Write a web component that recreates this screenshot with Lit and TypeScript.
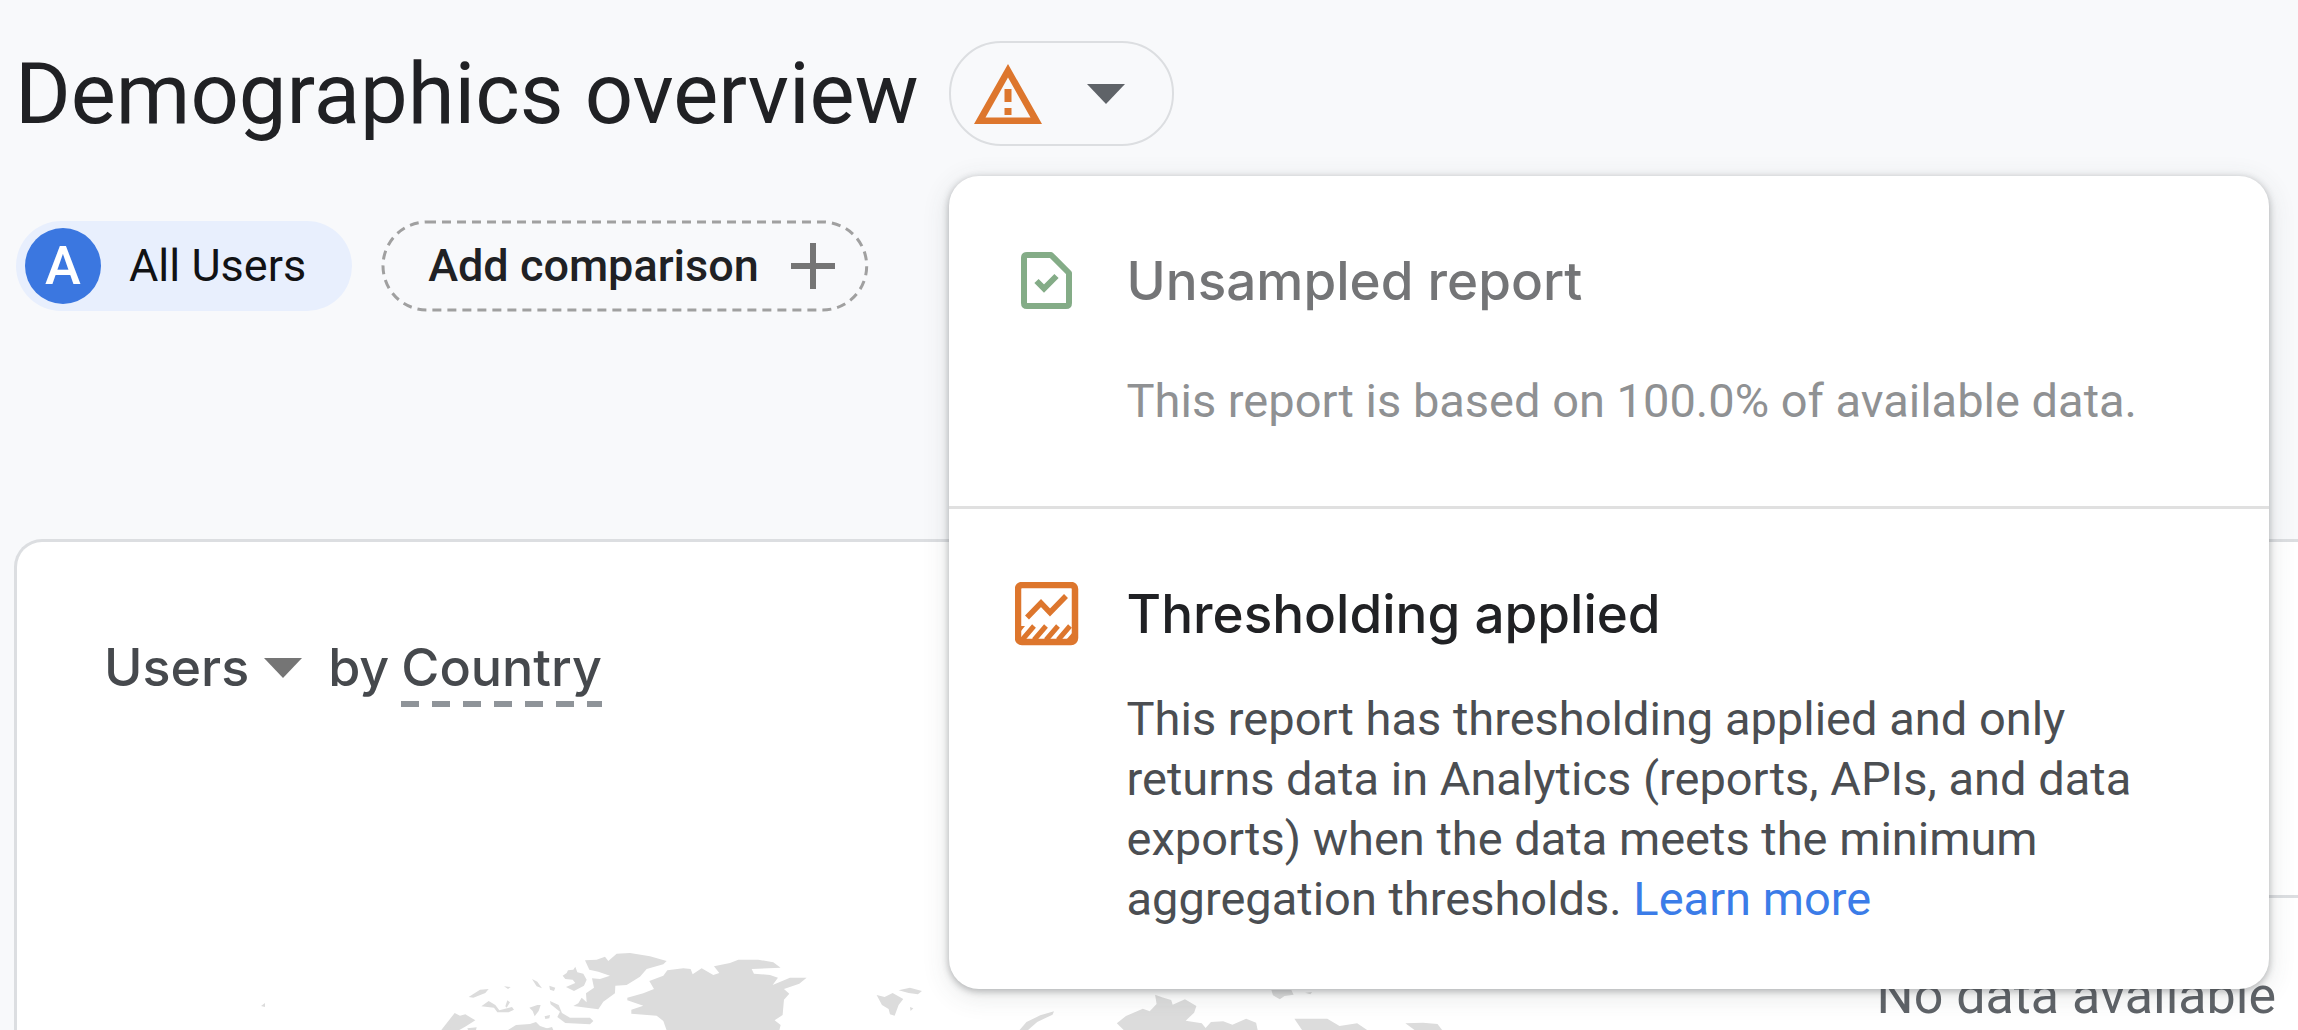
import { LitElement, html, css, svg } from "lit";
import { customElement, state } from "lit/decorators.js";

const caret = html`<svg class="caret" width="38" height="20" viewBox="0 0 38 20" aria-hidden="true">
  <path d="M0 0h38L19 20z" fill="currentColor" />
</svg>`;

const warningIcon = html`<svg width="68" height="60" viewBox="0 0 68 60" aria-hidden="true">
  <path fill="currentColor" fill-rule="evenodd" d="M34 0 68 60H0zM34 13.500 11.500 53.500H56.500z" />
  <path fill="currentColor" d="M30.500 25h7v13h-7zM30.500 44h7v7h-7z" />
</svg>`;

const unsampledIcon = html`<svg width="64" height="64" viewBox="0 0 64 64" aria-hidden="true">
  <path d="M12 6H36L54 24V54Q54 57 51 57H12Q9 57 9 54V9Q9 6 12 6Z" fill="none" stroke="currentColor" stroke-width="6" stroke-linejoin="round" />
  <path d="M21.500 32 29 39.500 41.500 27" fill="none" stroke="currentColor" stroke-width="6" />
</svg>`;

const thresholdIcon = html`<svg width="64" height="64" viewBox="0 0 64 64" aria-hidden="true">
  <rect x="3" y="3" width="57" height="57" rx="4" fill="none" stroke="currentColor" stroke-width="6.500" />
  <path d="M12 35.500 26 21 35 30.500 51 14" fill="none" stroke="currentColor" stroke-width="5.500" />
  <path d="M7 58 19 44M19 58 31 44M31 58 43 44M43 58 55 44" fill="none" stroke="currentColor" stroke-width="5" />
  <path d="M6 44h4l-4 5zM51 58 58 50v8z" fill="currentColor" />
</svg>`;

const plusIcon = html`<svg width="44" height="46" viewBox="0 0 44 46" aria-hidden="true">
  <path d="M22 0V46M0 23H44" stroke="currentColor" stroke-width="6" />
</svg>`;

/* Northern land masses, traced on a grid three times finer than the page. */
const northAmerica = [
  "465,46 500,44 525,35 535,48 560,26 600,24 660,34 710,48 700,58 650,72 630,95 590,120 556,122 555,145 520,170 505,193 430,183 445,175 455,158 470,172 468,145 492,128 486,100 510,102 540,92 505,80 478,74",
  "398,92 410,84 414,76 430,74 436,65 442,82 460,86 470,104 462,122 432,138 408,126 436,114 428,104 406,102",
  "592,158 640,145 672,132 658,108 700,92 712,76 760,70 782,72 788,88 815,70 850,90 868,84 852,64 900,54 925,44 985,44 1030,52 1052,68 965,72 972,86 1020,90 1044,98 1028,120 1080,98 1130,98 1108,116 1062,132 1078,146 1062,164 1058,210 1034,226 1052,240 1048,256 710,256 700,228 680,212 604,206 604,194 640,182 592,166",
  "34,255 74,204 90,212 106,208 136,226 108,244 88,255",
  "116,156 150,134 176,132 166,144 130,158",
  "154,184 176,168 196,180 208,196 246,186 252,194 236,202 202,202 192,188",
  "306,102 322,110 336,130 320,124",
  "358,122 376,128 372,138 360,134",
  "222,124 242,126 234,132",
  "298,188 322,180 332,180 326,198 314,214 308,198",
  "360,168 386,180 396,204 420,218 480,218 490,228 480,238 406,234 382,216 390,200 362,178",
  "344,214 360,210 358,220 346,222",
  "232,166 240,172 230,188 226,184",
  "112,250 140,247 138,255 114,255",
  "280,250 300,248 302,255 282,255",
  "344,252 366,246 370,255 346,255",
  "1340,150 1364,156 1388,144 1420,162 1406,180 1394,212 1380,208 1376,192 1356,180",
  "1406,136 1440,128 1476,138 1464,148 1436,144",
  "1440,186 1450,190 1442,198",
];

const eurasia = [
  "208,390 226,366 262,346 298,334 294,344 254,366 230,390",
  "462,370 486,348 530,326 548,334 566,312 562,284 580,292 604,300 608,314 640,298 670,318 664,338 642,362 684,370 694,384 708,366 740,364 764,374 800,356 826,368 830,390 480,390",
  "866,270 918,270 924,284 900,288 888,298 870,286",
  "926,356 1012,356 1044,378 1090,370 1116,390 946,390",
  "1216,370 1262,368 1300,372 1312,390 1240,390",
  "954,278 972,276 968,283",
];

@customElement("app-root")
export class AppRoot extends LitElement {
  static styles = css`
    :host {
      display: block;
      font-family: Roboto, "Liberation Sans", sans-serif;
      color: #202124;
    }
    * {
      box-sizing: border-box;
    }
    button {
      font: inherit;
      color: inherit;
      background: none;
      border: 0;
      padding: 0;
      margin: 0;
      cursor: pointer;
      text-align: left;
    }
    svg {
      display: block;
      flex: none;
    }
    h1,
    h2,
    h3,
    p {
      margin: 0;
      font-weight: 400;
    }
    .page {
      display: flex;
      flex-direction: column;
      min-height: 100vh;
      overflow: hidden;
      background: #f8f9fb;
    }
    .header {
      display: flex;
      align-items: center;
      gap: 30px;
      padding: 41px 15px 0;
    }
    .title {
      font-size: 85px;
      line-height: 104px;
      white-space: nowrap;
    }
    .quality {
      position: relative;
      z-index: 2;
    }
    .status {
      display: flex;
      align-items: center;
      gap: 45px;
      height: 105px;
      padding: 0 47px 0 23px;
      border: 2px solid #dcdee1;
      border-radius: 52px;
      color: #dd762d;
    }
    .status .caret {
      color: #5f6368;
    }
    .menu {
      position: absolute;
      top: calc(100% + 30px);
      left: 0;
      width: 1320px;
      background: #fff;
      border-radius: 30px;
      box-shadow: 0 2px 6px 1px rgba(60, 64, 67, 0.3), 0 6px 24px 4px rgba(60, 64, 67, 0.1);
    }
    .item {
      display: grid;
      grid-template-columns: 64px 1fr;
      column-gap: 48px;
      align-items: center;
      padding: 73px 66px 60px;
    }
    .item.muted {
      row-gap: 58px;
      padding-bottom: 75px;
      border-bottom: 3px solid #e0e0e0;
      color: #747577;
    }
    .item.active {
      row-gap: 43px;
    }
    .muted .icon {
      color: #84ac87;
    }
    .active .icon {
      color: #dd762d;
    }
    .item-title {
      font-family: Inter, "Liberation Sans", sans-serif;
      font-size: 53px;
      line-height: 64px;
      font-weight: 500;
    }
    .item-text {
      grid-column: 2;
      font-size: 47px;
      line-height: 60px;
      color: #4b4e52;
    }
    .muted .item-text {
      color: #8f9193;
    }
    .link {
      color: #3b7ce8;
      text-decoration: none;
    }
    .chips {
      display: flex;
      gap: 30px;
      padding: 75px 16px 0;
      font-size: 45px;
      line-height: 60px;
    }
    .chip {
      display: flex;
      align-items: center;
      height: 90px;
      border-radius: 45px;
      white-space: nowrap;
    }
    .chip.users {
      gap: 28px;
      padding: 0 46px 0 9px;
      background: #e8effd;
      color: #111214;
    }
    .avatar {
      display: grid;
      place-items: center;
      width: 76px;
      height: 76px;
      border-radius: 50%;
      background: #3b77e0;
      color: #fff;
      font-size: 54px;
      font-weight: 500;
    }
    .chip.add {
      position: relative;
      gap: 32px;
      padding: 0 33px 0 46px;
      font-weight: 500;
    }
    .chip.add svg {
      color: #757575;
    }
    .chip.add .outline {
      position: absolute;
      inset: 0;
      width: 100%;
      height: 100%;
      overflow: visible;
    }
    .card {
      flex: 1;
      margin: 228px 0 0 14px;
      border: 3px solid #dcdee1;
      border-width: 3px 0 0 3px;
      border-radius: 28px 0 0 0;
      background: #fff;
      display: flex;
      justify-content: space-between;
    }
    .main {
      padding-top: 96px;
      min-width: 0;
    }
    .heading {
      display: flex;
      align-items: flex-start;
      padding-left: 87px;
      font-family: Inter, "Liberation Sans", sans-serif;
      font-size: 52px;
      line-height: 60px;
      font-weight: 500;
      color: #46494d;
    }
    .metric {
      display: flex;
      align-items: center;
      gap: 15px;
      margin-right: 26px;
    }
    .metric .caret {
      color: #757575;
    }
    .dimension {
      margin-left: 12px;
      padding-bottom: 9px;
      background: repeating-linear-gradient(90deg, #8f9499 0 18px, transparent 18px 31px) left bottom / 100% 6px no-repeat;
    }
    .map {
      margin: 233px 0 0 183px;
      fill: #dcdcdc;
    }
    .side {
      flex: none;
      margin-top: 353px;
      border-top: 3px solid #dcdee1;
      padding: 68px 22px 0 0;
      font-size: 52px;
      line-height: 60px;
      color: #5f6368;
      white-space: nowrap;
    }
  `;

  @state() private open = true;

  private toggle() {
    this.open = !this.open;
  }

  private renderMenu() {
    return html`<section class="menu" id="quality-menu" aria-label="Data quality">
      <div class="item muted">
        <span class="icon">${unsampledIcon}</span>
        <h3 class="item-title">Unsampled report</h3>
        <p class="item-text">This report is based on 100.0% of available data.</p>
      </div>
      <div class="item active">
        <span class="icon">${thresholdIcon}</span>
        <h3 class="item-title">Thresholding applied</h3>
        <p class="item-text">
          This report has thresholding applied and only returns data in Analytics (reports, APIs, and data exports)
          when the data meets the minimum aggregation thresholds. <a class="link" href="#learn-more">Learn more</a>
        </p>
      </div>
    </section>`;
  }

  render() {
    return html`<div class="page">
      <header class="header">
        <h1 class="title">Demographics overview</h1>
        <div class="quality">
          <button
            class="status"
            aria-label="Data quality"
            aria-controls="quality-menu"
            aria-expanded=${this.open}
            @click=${this.toggle}
          >
            ${warningIcon}${caret}
          </button>
          ${this.open ? this.renderMenu() : null}
        </div>
      </header>
      <div class="chips">
        <button class="chip users"><span class="avatar">A</span><span>All Users</span></button>
        <button class="chip add">
          <svg class="outline" aria-hidden="true">
            <rect x="1" y="1" width="99.600%" height="88" rx="44" fill="none" stroke="#a0a0a0" stroke-width="3" stroke-dasharray="9 6" />
          </svg>
          <span>Add comparison</span>${plusIcon}
        </button>
      </div>
      <main class="card">
        <div class="main">
          <h2 class="heading">
            <button class="metric">Users ${caret}</button>
            <span>by</span>
            <button class="dimension">Country</button>
          </h2>
          <svg class="map" width="1300" height="90" viewBox="0 0 1300 90" role="img" aria-label="Users by country map">
            <g transform="translate(230 5) scale(0.3333)">
              ${northAmerica.map((points) => svg`<polygon points=${points} />`)}
            </g>
            <g transform="translate(740 -40) scale(0.3827 0.3333)">
              ${eurasia.map((points) => svg`<polygon points=${points} />`)}
            </g>
            <path d="M308 90 316 85 330 84 336 82 340 86 352 90zM61 66l4-3v4zM246 90l3-4 3 4z" />
          </svg>
        </div>
        <div class="side">No data available</div>
      </main>
    </div>`;
  }
}
